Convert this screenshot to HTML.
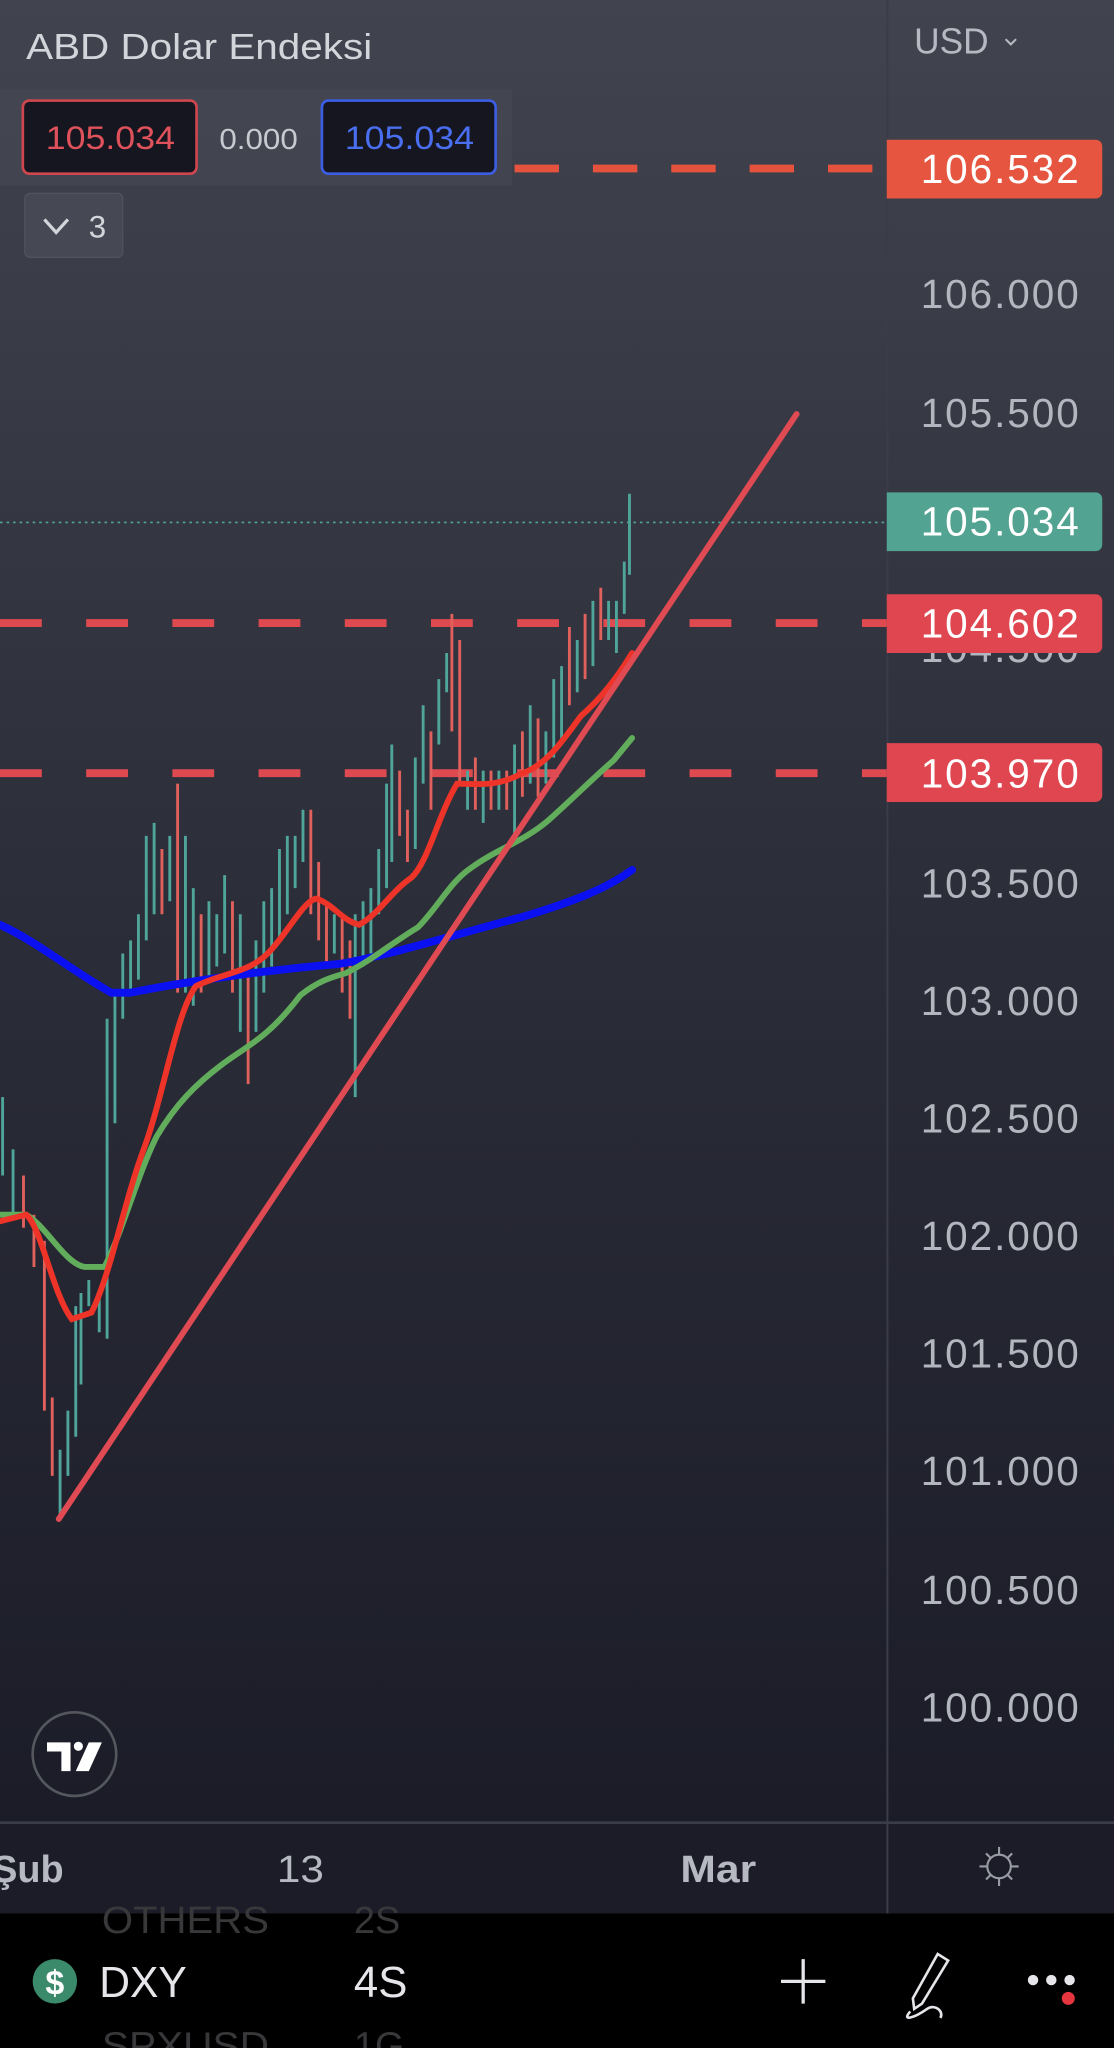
<!DOCTYPE html>
<html><head><meta charset="utf-8"><style>
html,body{margin:0;padding:0;background:#000;}
svg{display:block;}
text{font-family:"Liberation Sans",sans-serif;}
</style></head><body>
<svg width="1114" height="2048" viewBox="0 0 853 1568" preserveAspectRatio="none" xmlns="http://www.w3.org/2000/svg">
<defs>
<linearGradient id="bg" x1="0" y1="0" x2="0" y2="1">
<stop offset="0" stop-color="#41434f"/>
<stop offset="0.5" stop-color="#2b2d39"/>
<stop offset="1" stop-color="#1b1c28"/>
</linearGradient>
</defs>
<rect x="0" y="0" width="853" height="1395" fill="url(#bg)"/>
<rect x="0" y="1395" width="853" height="70" fill="#1b1c28"/>
<line x1="0" y1="1395.5" x2="853" y2="1395.5" stroke="#3a3d49" stroke-width="2"/>
<line x1="679.5" y1="0" x2="679.5" y2="1465" stroke="#3a3d49" stroke-width="1.5"/>

<rect x="0" y="68" width="392" height="74" fill="#474955" opacity="0.55"/>

<line x1="392" y1="129" x2="679" y2="129" stroke="#e5533f" stroke-width="6" stroke-dasharray="34 26" stroke-dashoffset="-2"/>
<line x1="0" y1="477" x2="679" y2="477" stroke="#df4a50" stroke-width="6" stroke-dasharray="32 34"/>
<line x1="0" y1="592" x2="679" y2="592" stroke="#df4a50" stroke-width="6" stroke-dasharray="32 34"/>
<line x1="0" y1="400" x2="679" y2="400" stroke="#4fa59a" stroke-width="1.2" stroke-dasharray="2 3"/>

<path fill="none" stroke="#4fa59a" stroke-width="2.2" d="
M2 840V900 M10 880V930 M46 1110V1160 M52 1080V1130 M58 1000V1100 M62 990V1060 M68 980V1000 M76 990V1020 M82 780V1025 M88 760V860 M94 730V780 M100 720V760 M106 700V750 M112 640V720 M118 630V700 M130 640V690 M142 640V760 M148 680V770 M160 690V750 M166 700V740 M172 670V730 M184 700V790 M196 720V790 M202 690V760 M208 680V740 M214 650V720 M220 640V700 M226 640V680 M232 620V660 M256 700V730 M272 700V840 M278 690V740 M284 680V730 M290 650V700 M296 600V680 M300 570V660 M318 580V650 M324 540V600 M336 520V570 M342 500V530 M358 590V620 M370 590V630 M382 590V620 M394 570V640 M406 540V600 M418 560V600 M424 520V580 M430 510V570 M442 490V530 M454 460V510 M466 460V490 M472 460V500 M478 430V470 M482 378V440"/>
<path fill="none" stroke="#e0605c" stroke-width="2.2" d="
M18 900V940 M26 930V970 M34 950V1080 M40 1070V1130 M124 650V700 M136 600V760 M154 700V760 M178 690V760 M190 740V830 M238 620V700 M244 660V720 M250 690V740 M262 700V760 M268 720V780 M306 590V640 M312 620V660 M330 560V620 M346 470V560 M352 490V600 M364 580V620 M376 590V620 M388 590V620 M400 560V610 M412 550V610 M436 480V540 M448 470V520 M460 450V490"/>

<path fill="none" stroke="#0b10f0" stroke-width="6" stroke-linecap="round" d="M0 708 C30 722,50 740,85 760 L100 760 C140 752,200 743,260 738 C300 731,350 715,400 702 C440 690,465 680,484 666"/>
<path fill="none" stroke="#62ad5c" stroke-width="4.5" stroke-linecap="round" d="M0 930 L20 930 C35 938,50 968,65 970 L80 970 C95 940,105 900,120 870 C135 845,150 830,170 815 C190 800,205 795,230 762 C245 750,255 748,265 745 C285 735,300 722,320 710 C335 695,345 675,360 665 C380 650,400 645,420 628 C440 610,455 595,470 582 L484 565"/>
<path fill="none" stroke="#ee3428" stroke-width="4.5" stroke-linecap="round" d="M0 935 L20 930 C32 940,40 990,55 1010 L70 1005 C85 975,95 920,110 880 C125 840,135 775,150 755 C170 745,190 745,205 730 C220 715,232 690,242 688 C255 692,262 705,275 708 C290 700,300 682,315 672 C328 660,335 625,350 600 C365 600,380 603,400 592 C420 585,432 565,445 548 C460 535,472 520,484 500"/>

<line x1="45" y1="1163" x2="610" y2="317" stroke="#e04a52" stroke-width="4.5" stroke-linecap="round"/>

<text x="20" y="45" font-size="28" fill="#d4d5db" textLength="265" lengthAdjust="spacingAndGlyphs">ABD Dolar Endeksi</text>
<rect x="17.5" y="77" width="133" height="56" rx="5" fill="#15161f" stroke="#d0464e" stroke-width="2"/>
<text x="35" y="114" font-size="25" fill="#e0525b" textLength="99" lengthAdjust="spacingAndGlyphs">105.034</text>
<text x="168" y="114" font-size="22" fill="#c8cad0" textLength="60" lengthAdjust="spacingAndGlyphs">0.000</text>
<rect x="246.5" y="77" width="133" height="56" rx="5" fill="#15161f" stroke="#3b5ee5" stroke-width="2"/>
<text x="264" y="114" font-size="25" fill="#4a6ef0" textLength="99" lengthAdjust="spacingAndGlyphs">105.034</text>
<rect x="19" y="148" width="75" height="49" rx="4" fill="#464853" stroke="#50525d" stroke-width="1"/>
<path d="M34 168 L43 178 L52 168" fill="none" stroke="#d4d5db" stroke-width="2.5"/>
<text x="68" y="182" font-size="24" fill="#d4d5db">3</text>

<text x="700" y="41" font-size="28" fill="#b7b9c2" textLength="57" lengthAdjust="spacingAndGlyphs">USD</text>
<path d="M770 30 L774 34 L778 30" fill="none" stroke="#b7b9c2" stroke-width="1.6"/>
<g font-size="31" fill="#b4b6bf" lengthAdjust="spacingAndGlyphs">
<text x="705" y="236" textLength="121">106.000</text>
<text x="705" y="327" textLength="121">105.500</text>
<text x="705" y="507" textLength="121">104.500</text>
<text x="705" y="687" textLength="121">103.500</text>
<text x="705" y="777" textLength="121">103.000</text>
<text x="705" y="867" textLength="121">102.500</text>
<text x="705" y="957" textLength="121">102.000</text>
<text x="705" y="1047" textLength="121">101.500</text>
<text x="705" y="1137" textLength="121">101.000</text>
<text x="705" y="1228" textLength="121">100.500</text>
<text x="705" y="1318" textLength="121">100.000</text>
</g>
<path d="M679 107 H839 a5 5 0 0 1 5 5 V147 a5 5 0 0 1 -5 5 H679Z" fill="#e5553f"/>
<path d="M679 377 H839 a5 5 0 0 1 5 5 V417 a5 5 0 0 1 -5 5 H679Z" fill="#52a392"/>
<path d="M679 455 H839 a5 5 0 0 1 5 5 V495 a5 5 0 0 1 -5 5 H679Z" fill="#df4650"/>
<path d="M679 569 H839 a5 5 0 0 1 5 5 V609 a5 5 0 0 1 -5 5 H679Z" fill="#df4650"/>
<g font-size="31" fill="#ffffff" lengthAdjust="spacingAndGlyphs">
<text x="705" y="140" textLength="121">106.532</text>
<text x="705" y="410" textLength="121">105.034</text>
<text x="705" y="488" textLength="121">104.602</text>
<text x="705" y="603" textLength="121">103.970</text>
</g>

<circle cx="57" cy="1343" r="32" fill="none" stroke="#55575f" stroke-width="2"/>
<path d="M36 1334 H54 V1356 H47 V1341 H36Z" fill="#fff"/>
<circle cx="60" cy="1337" r="3.5" fill="#fff"/>
<path d="M68 1334 H78 L68 1356 H58Z" fill="#fff"/>

<text x="-6" y="1441" font-size="29" font-weight="bold" fill="#b7b9c2">Şub</text>
<text x="212" y="1441" font-size="29" fill="#b7b9c2" textLength="36" lengthAdjust="spacingAndGlyphs">13</text>
<text x="521" y="1441" font-size="29" font-weight="bold" fill="#b7b9c2" textLength="58" lengthAdjust="spacingAndGlyphs">Mar</text>
<circle cx="765" cy="1429" r="9" fill="none" stroke="#9a9ca5" stroke-width="1.6"/>
<path d="M765 1414V1420 M765 1438V1444 M750 1429H756 M774 1429H780 M755 1419L759 1423 M771 1435L775 1439 M775 1419L771 1423 M759 1435L755 1439" stroke="#9a9ca5" stroke-width="1.6"/>

<rect x="0" y="1465" width="853" height="103" fill="#000"/>
<text x="78" y="1480" font-size="29" fill="#38383b" textLength="128" lengthAdjust="spacingAndGlyphs">OTHERS</text>
<text x="271" y="1480" font-size="29" fill="#38383b">2S</text>
<text x="78" y="1576" font-size="29" fill="#38383b" textLength="128" lengthAdjust="spacingAndGlyphs">SPXUSD</text>
<text x="271" y="1576" font-size="29" fill="#38383b">1G</text>
<circle cx="42" cy="1517" r="17" fill="#3b8a6c"/>
<text x="42" y="1527" font-size="26" font-weight="bold" fill="#fff" text-anchor="middle">$</text>
<text x="76" y="1529" font-size="33" fill="#e6e6ea" textLength="67" lengthAdjust="spacingAndGlyphs">DXY</text>
<text x="271" y="1529" font-size="33" fill="#e6e6ea" textLength="41" lengthAdjust="spacingAndGlyphs">4S</text>
<path d="M615 1500V1534 M598 1517H632" stroke="#e6e6ea" stroke-width="2.5"/>
<path d="M718 1496 L726 1501 L706 1534 L700 1538 L699 1530 Z" fill="none" stroke="#e6e6ea" stroke-width="2"/>
<path d="M697 1540 C690 1548,700 1545,710 1538 C716 1534,723 1540,720 1545" fill="none" stroke="#e6e6ea" stroke-width="2"/>
<circle cx="791" cy="1516" r="4" fill="#e6e6ea"/>
<circle cx="805" cy="1516" r="4" fill="#e6e6ea"/>
<circle cx="819" cy="1516" r="4" fill="#e6e6ea"/>
<circle cx="818" cy="1530" r="5" fill="#e5353f"/>
</svg>
</body></html>
